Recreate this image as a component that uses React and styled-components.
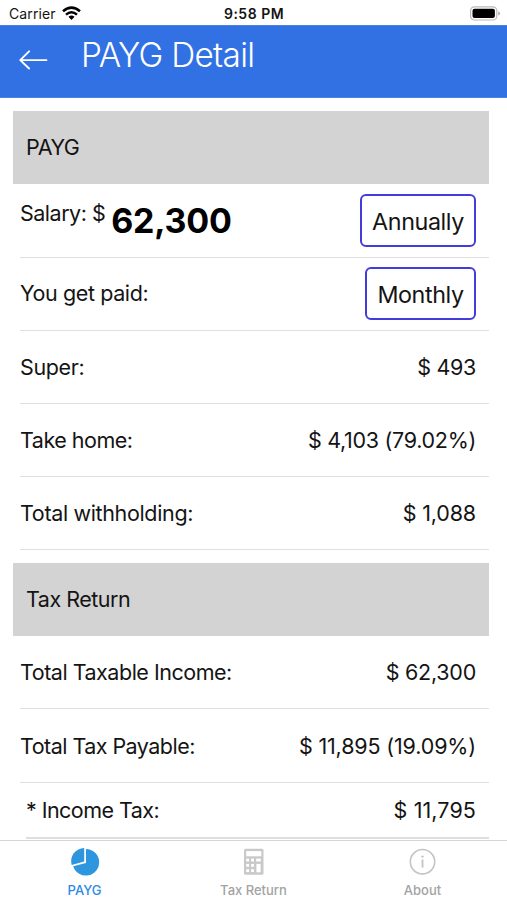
import React from "react";
import styled, { createGlobalStyle } from "styled-components";

const GlobalStyle = createGlobalStyle`
  *, *::before, *::after { box-sizing: border-box; }
  html, body { margin: 0; background: #fff; overflow: hidden; }
  body { font-family: Inter, "Liberation Sans", sans-serif; color: #141414; }
`;

const Screen = styled.div`
  width: 507px;
  height: 900px;
  display: flex;
  flex-direction: column;
  background: #fff;
  overflow: hidden;
`;

const StatusBar = styled.div`
  height: 25px;
  flex: none;
  display: grid;
  grid-template-columns: 1fr auto 1fr;
  align-items: center;
  padding: 2px 6px 0 7px;
  font-size: 14px;
  line-height: 20px;
`;

const Carrier = styled.div`
  display: flex;
  align-items: center;
  gap: 6px;
  padding-left: 2px;
  letter-spacing: 0.1px;
`;

const Clock = styled.div`
  font-weight: 600;
  font-size: 14px;
  letter-spacing: 0.5px;
`;

const Battery = styled.svg`
  justify-self: end;
`;

const Header = styled.header`
  height: 73px;
  flex: none;
  display: flex;
  align-items: flex-start;
  background: #3271e3;
  border-top: 1px solid #4b7fe0;
  border-bottom: 1px solid #4b82e6;
  padding: 9px 0 0 19px;
  color: #fff;
`;

const BackButton = styled.button`
  border: 0;
  padding: 0;
  margin: 14px 33px 0 0;
  background: none;
  width: 29px;
  height: 22px;
  display: flex;
`;

const Title = styled.h1`
  margin: 0;
  font-weight: 350;
  font-size: 33.3px;
  line-height: 40px;
  letter-spacing: -0.68px;
`;

const Content = styled.main`
  flex: 1;
  min-height: 0;
  overflow: hidden;
  padding: 13px 18px 0 13px;
`;

const SectionHeader = styled.h2`
  height: 73px;
  margin: 0;
  padding: 0 0 2px 13px;
  display: flex;
  align-items: center;
  background: #d3d3d3;
  font-weight: 400;
  font-size: 21.5px;
  letter-spacing: -0.5px;
`;

const Section = styled.section`
  margin-bottom: 13px;
`;

const Row = styled.div`
  height: ${(p) => p.$height || 73.25}px;
  margin-left: ${(p) => (p.$indent ? 13 : 7)}px;
  padding-right: 13px;
  display: flex;
  align-items: center;
  justify-content: space-between;
  border-bottom: ${(p) => p.$line || 1}px solid #dfdfdf;
  font-size: 21.5px;
  line-height: 28px;
`;

const Label = styled.span`
  padding-bottom: ${(p) => p.$lift || 0}px;
  letter-spacing: ${(p) => p.$track ?? -0.35}px;
  white-space: pre;
`;

const Value = styled.span`
  letter-spacing: ${(p) => p.$track ?? -0.3}px;
  white-space: pre;
`;

const SalaryEntry = styled.div`
  display: flex;
  align-items: flex-start;
  gap: 6px;
  height: 40px;
  line-height: 26px;
`;

const Amount = styled.strong`
  font-weight: 700;
  font-size: 34px;
  line-height: 41px;
  color: #000;
  letter-spacing: -0.25px;
`;

const PeriodButton = styled.button`
  width: ${(p) => p.$width}px;
  height: 53px;
  padding: 3px 0 0;
  border: 2px solid #433cdc;
  border-radius: 6px;
  background: #fff;
  color: #141414;
  font: 400 23.3px/28px Inter, "Liberation Sans", sans-serif;
  letter-spacing: -0.4px;
`;

const TabBar = styled.nav`
  height: 60px;
  flex: none;
  display: grid;
  grid-template-columns: repeat(3, 1fr);
  border-top: 1px solid #d6d6d6;
  background: #fff;
`;

const Tab = styled.a`
  display: flex;
  flex-direction: column;
  align-items: center;
  padding-top: 6px;
  color: ${(p) => (p.$active ? "#2b8ae6" : "#a3a3a3")};
  font-size: 13px;
  font-weight: 500;
  line-height: 18px;
  gap: 4px;
`;

const WifiIcon = () => (
  <svg width="19" height="15" viewBox="0 0 19 15" fill="none" stroke="#000" strokeWidth="2.5">
    <path d="M1 5.3Q9.5 -2.1 18 5.3" />
    <path d="M4 8.6Q9.5 3.8 15 8.6" />
    <path d="M6.5 10.8Q9.5 8.3 12.5 10.8L9.5 14Z" fill="#000" stroke="none" />
  </svg>
);

const BatteryIcon = () => (
  <Battery width="31" height="15" viewBox="0 0 31 15">
    <rect x="0.6" y="0.8" width="26.2" height="13.2" rx="3.8" fill="#fff" stroke="#b9b9b9" strokeWidth="1.2" />
    <rect x="2.5" y="2.7" width="22.4" height="9.4" rx="2" fill="#000" />
    <path d="M28.2 5.3Q30.1 6 30.1 7.4T28.2 9.5Z" fill="#b0b0b0" />
  </Battery>
);

const BackIcon = () => (
  <svg width="30" height="22" viewBox="0 0 30 22" fill="none" stroke="#fff" strokeWidth="2" strokeLinecap="round" strokeLinejoin="round">
    <path d="M28.4 11.1H1.5M10.4 2.1L1.3 11.1L10.4 19.8" />
  </svg>
);

const PieIcon = () => (
  <svg width="30" height="30" viewBox="0 0 30 30" fill="#2e96de">
    <path d="M16 2A13.3 13.3 0 1 1 3.2 19.3L16 15.9Z" />
    <path d="M14.2 0.9V14.5L1.7 17.9A13.3 13.3 0 0 1 14.2 0.9Z" />
  </svg>
);

const CalculatorIcon = () => (
  <svg width="30" height="30" viewBox="0 0 30 30">
    <rect x="5" y="1.8" width="19.5" height="26" rx="1.5" fill="#c9c9c9" />
    <g fill="#fff">
      <rect x="7.2" y="4.1" width="15.1" height="5.2" />
      <rect x="7.2" y="11.6" width="2.9" height="2.9" />
      <rect x="12.1" y="11.6" width="2.9" height="2.9" />
      <rect x="17.2" y="11.6" width="4.6" height="2.9" />
      <rect x="7.2" y="16.9" width="2.9" height="2.9" />
      <rect x="12.1" y="16.9" width="2.9" height="2.9" />
      <rect x="7.2" y="22.2" width="2.9" height="2.9" />
      <rect x="12.1" y="22.2" width="2.9" height="2.9" />
      <rect x="17.4" y="16.9" width="4.2" height="8.4" />
    </g>
  </svg>
);

const InfoIcon = () => (
  <svg width="30" height="30" viewBox="0 0 30 30" fill="none" stroke="#c4c4c4">
    <circle cx="14.5" cy="14.7" r="12.2" strokeWidth="1.6" />
    <path d="M14.5 12.5V20.5" strokeWidth="1.9" />
    <circle cx="14.5" cy="9.6" r="1.2" fill="#c4c4c4" stroke="none" />
  </svg>
);

export default function App() {
  return (
    <>
      <GlobalStyle />
      <Screen>
        <StatusBar>
          <Carrier>
            Carrier
            <WifiIcon />
          </Carrier>
          <Clock>9:58 PM</Clock>
          <BatteryIcon />
        </StatusBar>
        <Header>
          <BackButton aria-label="Back">
            <BackIcon />
          </BackButton>
          <Title>PAYG Detail</Title>
        </Header>
        <Content>
          <Section>
            <SectionHeader>PAYG</SectionHeader>
            <Row $height={73.5}>
              <SalaryEntry>
                <Label $track={-0.5}>Salary: $</Label>
                <Amount>62,300</Amount>
              </SalaryEntry>
              <PeriodButton $width={116}>Annually</PeriodButton>
            </Row>
            <Row>
              <Label $track={-0.4} $lift={1.5}>You get paid:</Label>
              <PeriodButton $width={111}>Monthly</PeriodButton>
            </Row>
            <Row>
              <Label>Super:</Label>
              <Value>$ 493</Value>
            </Row>
            <Row>
              <Label $track={-0.5}>Take home:</Label>
              <Value>$ 4,103 (79.02%)</Value>
            </Row>
            <Row $height={72.75}>
              <Label>Total withholding:</Label>
              <Value $track={-0.15}>$ 1,088</Value>
            </Row>
          </Section>
          <Section>
            <SectionHeader>Tax Return</SectionHeader>
            <Row $height={73}>
              <Label $track={-0.48}>Total Taxable Income:</Label>
              <Value $track={-0.25}>$ 62,300</Value>
            </Row>
            <Row $height={74}>
              <Label $track={-0.53}>Total Tax Payable:</Label>
              <Value $track={-0.15}>$ 11,895 (19.09%)</Value>
            </Row>
            <Row $indent $height={55.5} $line={2}>
              <Label $track={-0.55}>* Income Tax:</Label>
              <Value $track={0.1}>$ 11,795</Value>
            </Row>
          </Section>
        </Content>
        <TabBar>
          <Tab $active>
            <PieIcon />
            PAYG
          </Tab>
          <Tab>
            <CalculatorIcon />
            Tax Return
          </Tab>
          <Tab>
            <InfoIcon />
            About
          </Tab>
        </TabBar>
      </Screen>
    </>
  );
}
